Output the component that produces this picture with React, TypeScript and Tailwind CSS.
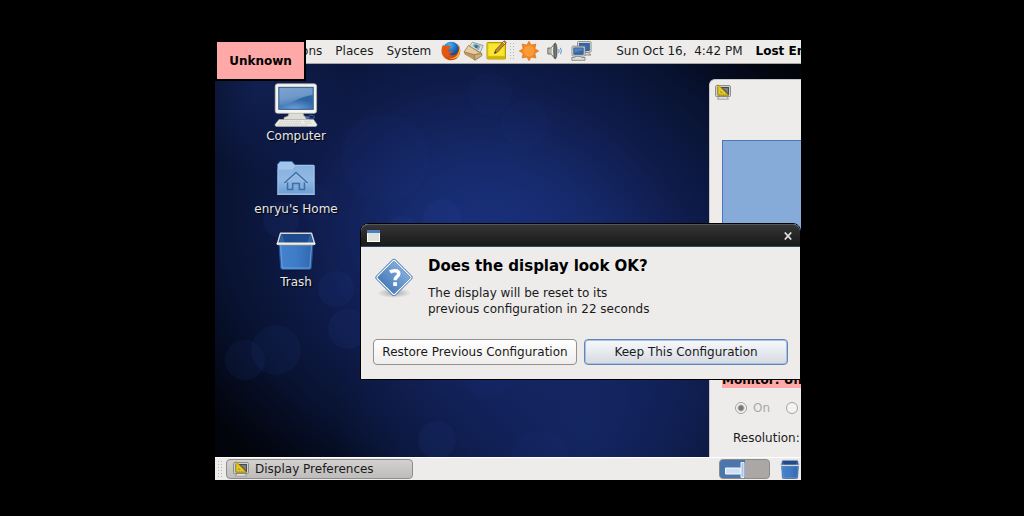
import type { ReactNode } from "react";

function DisplayIcon({ className }: { className: string }) {
  return (
    <svg viewBox="0 0 16 16" className={className} aria-hidden="true">
      <path d="M4 12.500h8l1.500 2.700H2.500z" fill="#e6e6e2" stroke="#8b8d88" strokeWidth=".8" />
      <rect x=".6" y="1.600" width="14.800" height="11" rx="1" fill="#d8d9d4" stroke="#85877f" />
      <rect x="3" y="3.400" width="10.400" height="7.600" fill="#55585a" stroke="#34383a" strokeWidth=".8" />
      <path d="M8 4l5 0 0 5z" fill="#7c8083" />
      <path d="M3 .6v10.600h10.400z" fill="#e9c820" stroke="#a58a00" strokeWidth=".7" />
      <path d="M5.400 6.800v2.200h2.400z" fill="#a8943c" />
      <path d="M4.600 10.800v-1M6.600 10.800v-1M8.600 10.800v-1M10.600 10.800v-1" stroke="#8e7600" strokeWidth=".5" />
    </svg>
  );
}

function FirefoxIcon() {
  return (
    <svg viewBox="0 0 20 20" className="size-5 shrink-0" aria-hidden="true">
      <defs>
        <radialGradient id="globe" cx=".4" cy=".2" r=".8">
          <stop offset="0" stopColor="#4fb4ec" />
          <stop offset=".6" stopColor="#1d5fb2" />
          <stop offset="1" stopColor="#132f72" />
        </radialGradient>
        <linearGradient id="fox" x1="0" y1="0" x2=".7" y2="1">
          <stop offset="0" stopColor="#e8590c" />
          <stop offset=".6" stopColor="#e4560f" />
          <stop offset="1" stopColor="#c23c0b" />
        </linearGradient>
      </defs>
      <circle cx="10.200" cy="9.200" r="8.400" fill="url(#globe)" />
      <path
        d="M2.100 3.600C.3 6.600.2 10.400.9 12.800 2.500 17 6 19.300 10 19.300c5.400 0 9.300-4.200 9.300-9.500 0-2.900-1-4.900-2.200-6.200.7 1.500.9 2.900.7 4.200C17.300 11.800 14.600 14.300 11.600 14.300c-1.700 0-3-.7-3.700-1.900 1.400.3 2.500-.5 3.600-1.200.5-.3.3-1-.5-1-1.300 0-1.600.6-2.900.3-1-.3-1.500-1-1.400-1.900.6-.4 1.300-.4 2.100-.1 0-1-.2-1.400-.3-1.700.3-.9 1.100-1.400 1.800-1.800C8.900 4.700 7.500 4.500 6.500 4.900 5.400 4.600 4.500 4.700 3.600 5.300 2.900 4.900 2.400 4.300 2.100 3.600z"
        fill="url(#fox)"
      />
      <path d="M17.400 4.200c1.400 3.700.9 7.600-1.600 10.300-2.200 2.300-5 3-7.800 2.300 3.600 2.100 8.200.7 10.100-2.900 1.500-3 1.200-7-.7-9.700z" fill="#fbc02a" />
    </svg>
  );
}

function MailIcon() {
  return (
    <svg viewBox="0 0 21 20" className="h-5 w-[21px] shrink-0" aria-hidden="true">
      <path d="M6 5.500L9.500 1.200l10.700 3.300-3.200 7.500z" fill="#dde5e0" stroke="#84908a" strokeWidth=".8" />
      <path d="M9.300 4.800l2-2.200 6.400 2.200-2.200 4.600z" fill="#86aec2" />
      <circle cx="13.300" cy="5.400" r="1.700" fill="#3d7187" />
      <path d="M1 11l4.500-6.500L18.800 12.500v2.300l-6.800 4.400z" fill="#d3b07a" stroke="#8d7044" strokeWidth=".8" />
      <path d="M5.500 5l9.500 6.200-4 2.300L1.500 11z" fill="#e3cda3" />
      <path d="M1 11l.6 2.500L12 19.200l-.5-5.500z" fill="#bf9860" />
      <path d="M1 11l10.500 2.700L18.800 12.500M11.500 13.700l.5 5.500" fill="none" stroke="#98784a" strokeWidth=".8" />
    </svg>
  );
}

function NoteIcon() {
  return (
    <svg viewBox="0 0 21 21" className="size-[21px] shrink-0" aria-hidden="true">
      <rect x="1" y="2.500" width="18.500" height="16.500" rx=".8" fill="#ecd412" stroke="#b99b00" />
      <rect x="2.700" y="4.200" width="15" height="11.500" fill="#f8e832" />
      <path d="M1.500 16.200h17.500v2.400H1.500z" fill="#d2b400" />
      <path d="M8.500 13.500l1-3.400L18.300.8l2 1.700-9 9.800z" fill="#c68b3a" stroke="#6d4a16" strokeWidth=".8" />
      <path d="M8.500 13.500l.6-2 1.300 1.100z" fill="#222" />
      <path d="M17 2.200l2 1.700" stroke="#efe6d2" strokeWidth=".9" />
    </svg>
  );
}

function SunIcon() {
  return (
    <svg viewBox="0 0 20 20" className="size-5 shrink-0" aria-hidden="true">
      <path
        d="M10 .2l2.100 3.900L16.900 3l-1 4.700L19.800 10l-3.900 2.200 1 4.800-4.800-1L10 19.800 7.900 16l-4.800 1 1-4.800L.2 10l3.900-2.300-1-4.700 4.800 1.100z"
        fill="#f5851f"
        stroke="#d96a0b"
        strokeWidth=".6"
      />
      <circle cx="10" cy="10" r="5.600" fill="#fb9a38" />
    </svg>
  );
}

function SpeakerIcon() {
  return (
    <svg viewBox="0 0 16 20" className="h-5 w-4 shrink-0" aria-hidden="true">
      <path d="M.8 7h3.200L8 2.200v15.600L4 13H.8z" fill="#b4b7b2" stroke="#5c5f5b" strokeWidth=".8" />
      <path d="M5.500 6v8" stroke="#e7e8e5" strokeWidth="1.300" />
      <ellipse cx="8.400" cy="10" rx="1.600" ry="7.800" fill="#747872" stroke="#3f423f" strokeWidth=".7" />
      <path d="M11.600 8.200q1.200 1.800 0 3.600M13.400 6.800q2 3.200 0 6.400" fill="none" stroke="#5c92cf" />
    </svg>
  );
}

function NetworkIcon() {
  return (
    <svg viewBox="0 0 21 20" className="h-5 w-[21px] shrink-0" aria-hidden="true">
      <g stroke="#747773" strokeWidth=".8">
        <path d="M12 11.500h5l3 2.500H10z" fill="#deded9" />
        <rect x="6.500" y=".6" width="13.500" height="10.600" rx=".8" fill="#e9e9e5" />
        <rect x="8.300" y="2.300" width="10" height="7.200" fill="#3568ac" stroke="#264d84" />
        <path d="M5 15h4l1.500 1.500h3.500v2.800H.8v-2.800h3z" fill="#deded9" />
        <rect x="1" y="5.200" width="13" height="9.800" rx=".8" fill="#e9e9e5" />
        <rect x="2.800" y="6.900" width="9.400" height="6.400" fill="#3568ac" stroke="#264d84" />
      </g>
      <path d="M3.200 11.500c4-.4 6-2 8.600-2.200V7.300H3.200z" fill="#6d9bd2" opacity=".5" />
    </svg>
  );
}

function ComputerIcon() {
  return (
    <svg viewBox="0 0 44 44" className="size-11" aria-hidden="true">
      <defs>
        <linearGradient id="screen" x1="0" y1="0" x2=".3" y2="1">
          <stop offset="0" stopColor="#7ea3cb" />
          <stop offset=".5" stopColor="#6f99c9" />
          <stop offset="1" stopColor="#3a70b0" />
        </linearGradient>
        <radialGradient id="reflection" cx=".45" cy="1" r=".7">
          <stop offset="0" stopColor="#6da0dc" />
          <stop offset="1" stopColor="#2f66a5" />
        </radialGradient>
      </defs>
      <path d="M15 30h14l1 3 5 1.500v2H10v-2l4-1.500z" fill="#dcddd6" stroke="#a2a49c" strokeWidth=".5" />
      <path d="M31 34c3 .6 4-2 7-1.600 3 .4 3 2.600 1 2.800-4 .2-6-.6-7 1" fill="none" stroke="#2f588f" strokeWidth="1.200" />
      <rect x="1.200" y=".8" width="41.400" height="29.500" rx="2.500" fill="#f4f4f0" stroke="#b9bab3" strokeWidth=".7" />
      <rect x="4.800" y="4.300" width="34.400" height="22" fill="url(#screen)" stroke="#2c5489" />
      <path d="M5.300 23c10 0 18-9 33.400-11v13.800H5.300z" fill="url(#reflection)" />
      <path d="M5 36.500h34.500L43 41.500q0 2-1.500 2h-39q-1.500 0-1.500-2z" fill="#ecece7" stroke="#b3b4ab" strokeWidth=".6" />
      <path d="M6 38.300h21M5 40.300h22M4 42.100h30M30 38.300h7M31 40.300h7" stroke="#c6c7bf" strokeWidth=".9" strokeDasharray="1.600 .7" />
    </svg>
  );
}

function HomeIcon() {
  return (
    <svg viewBox="0 0 40 36" className="h-9 w-10" aria-hidden="true">
      <defs>
        <linearGradient id="folder" x1="0" y1="0" x2="0" y2="1">
          <stop offset="0" stopColor="#86b0de" />
          <stop offset=".5" stopColor="#93b9e3" />
          <stop offset="1" stopColor="#6e9ed3" />
        </linearGradient>
      </defs>
      <path d="M1.500 9V4.500L4 1.500h12l3 3.500H37q1.500 0 1.500 1.500v27H1.500z" fill="#a3c4ea" stroke="#4a7ab4" />
      <path d="M2 9h14L19.500 5.500H38V34H2z" fill="url(#folder)" stroke="#a9c9ec" strokeWidth=".8" />
      <path d="M1 34.500h38" stroke="#b3cfee" strokeWidth=".8" />
      <path d="M8.500 23L20 12.500 31.500 23M11.500 22v7.500h5.200v-6h6.600v6h5.200V22" fill="none" stroke="#3f6fa9" strokeWidth="1.500" />
      <path d="M9 24.300L20 14.200 31 24.300" fill="none" stroke="#b4d0ef" strokeWidth=".6" />
    </svg>
  );
}

function TrashIcon({ className }: { className: string }) {
  return (
    <svg viewBox="0 0 40 40" className={className} aria-hidden="true">
      <defs>
        <linearGradient id="bin" x1="0" y1="0" x2="1" y2="0">
          <stop offset="0" stopColor="#4483cf" />
          <stop offset=".5" stopColor="#3f7cc6" />
          <stop offset="1" stopColor="#3067ae" />
        </linearGradient>
      </defs>
      <ellipse cx="20" cy="38.500" rx="16" ry="1.300" fill="#000" opacity=".35" />
      <path d="M3 12l1.600 24.500q.2 2 2 2h26.800q1.800 0 2-2L37 12z" fill="url(#bin)" stroke="#24518f" />
      <path d="M4.500 14l1.700 23h27.600l1.700-23z" fill="none" stroke="#74a5df" strokeWidth=".8" />
      <path d="M4.500 2.500h31L38.500 12H1.500z" fill="#1f4a8b" />
      <path d="M5.500 3.500L3 12h6L6 3z" fill="#2d61a8" />
      <path d="M34.500 3.500L37 12h-6l3-9z" fill="#2d61a8" />
      <path d="M4.500 2.200h31L38.700 13H1.300z" fill="none" stroke="#d9d8d2" strokeWidth="1.400" strokeLinejoin="round" />
      <path d="M1.700 12.600h36.600" stroke="#f1f0ec" strokeWidth="2.200" strokeLinecap="round" />
      <path d="M2.500 14.300h35" stroke="#88827a" strokeWidth=".7" />
    </svg>
  );
}

function QuestionIcon() {
  return (
    <svg viewBox="0 0 42 42" className="size-[42px] shrink-0" aria-hidden="true">
      <defs>
        <linearGradient id="sign" x1="0" y1="0" x2="0" y2="1">
          <stop offset="0" stopColor="#7ea9dc" />
          <stop offset="1" stopColor="#4c7fbc" />
        </linearGradient>
        <radialGradient id="shade">
          <stop offset="0" stopColor="#000" stopOpacity=".3" />
          <stop offset="1" stopColor="#000" stopOpacity="0" />
        </radialGradient>
      </defs>
      <ellipse cx="21" cy="36" rx="17" ry="5" fill="url(#shade)" />
      <rect x="7.500" y="7" width="27" height="27" rx="2.500" transform="rotate(45 21 20.500)" fill="#fff" stroke="#5b88bf" />
      <rect x="9.300" y="8.800" width="23.400" height="23.400" rx="1" transform="rotate(45 21 20.500)" fill="url(#sign)" stroke="#47749f" strokeWidth=".6" />
      <path d="M17 15q2-1.300 4.800-1.300 4 0 4 3.100 0 1.700-2.100 3.200-1.600 1.100-1.600 3.300" fill="none" stroke="#fff" strokeWidth="3.500" />
      <rect x="20.200" y="25.200" width="3.800" height="3.800" fill="#fff" />
    </svg>
  );
}

function Wallpaper() {
  const bubbles = [
    [227, 178, 19], [222, 400, 19], [61, 310, 25], [30, 320, 20], [101, 162, 18], [121, 249, 18], [133, 289, 20],
    [273, 330, 27], [187, 194, 18], [170, 118, 44], [275, 54, 22], [310, 84, 24], [66, 180, 18], [325, 420, 30],
  ];
  return (
    <svg className="absolute inset-0 h-full w-full" viewBox="0 0 586 440" preserveAspectRatio="none" aria-hidden="true">
      <defs>
        <radialGradient id="glow" gradientUnits="userSpaceOnUse" cx="0" cy="0" r="1" gradientTransform="translate(285 205) rotate(20) scale(390 310)">
          <stop offset="0" stopColor="#1a3180" />
          <stop offset=".25" stopColor="#162a6c" />
          <stop offset=".5" stopColor="#0f1c4c" />
          <stop offset=".75" stopColor="#081230" />
          <stop offset="1" stopColor="#02040b" />
        </radialGradient>
        <radialGradient id="corner" gradientUnits="userSpaceOnUse" cx="45" cy="45" r="90">
          <stop offset="0" stopColor="#15265f" stopOpacity=".7" />
          <stop offset="1" stopColor="#15265f" stopOpacity="0" />
        </radialGradient>
        <radialGradient id="lower" gradientUnits="userSpaceOnUse" cx="370" cy="390" r="250">
          <stop offset="0" stopColor="#152868" stopOpacity=".85" />
          <stop offset="1" stopColor="#152868" stopOpacity="0" />
        </radialGradient>
      </defs>
      <rect width="586" height="440" fill="url(#glow)" />
      <rect width="586" height="440" fill="url(#corner)" />
      <rect width="586" height="440" fill="url(#lower)" />
      {bubbles.map(([x, y, r]) => (
        <circle key={`${x}-${y}`} cx={x} cy={y} r={r} fill="#3c62d8" opacity={x < 230 && y > 170 ? 0.07 : 0.03} />
      ))}
    </svg>
  );
}

function Grip() {
  return (
    <svg viewBox="0 0 6 18" className="h-[18px] w-1.5 shrink-0" aria-hidden="true">
      <path d="M1.500 1v17M4.500 1v17" stroke="#b5b3b0" strokeWidth="1" strokeDasharray="1 2" />
    </svg>
  );
}

function DesktopItem({ icon, label }: { icon: ReactNode; label: string }) {
  return (
    <a href="#" className="flex h-[73px] flex-col items-center">
      <span className="flex h-11 items-center">{icon}</span>
      <span className="mt-px leading-4 text-[#e8e8e8] [text-shadow:1px_1px_1px_#000]">{label}</span>
    </a>
  );
}

function PreferencesWindow() {
  return (
    <section aria-label="Display Preferences" className="absolute top-[39px] bottom-0 left-[494px] w-[420px] rounded-t-md border border-b-0 border-[#c9c7c5] bg-[#edeceb]">
      <div className="flex h-6 items-center px-[5px]">
        <DisplayIcon className="size-4" />
      </div>
      <div className="mx-3 mt-9 h-[220px] border border-[#4a78b4] bg-[#86abd9]" />
      <h2 className="mx-3 mt-3 h-4 bg-[#ffa8a8] leading-4 font-bold whitespace-nowrap text-black">Monitor: Unknown</h2>
      <fieldset disabled className="mt-3 ml-[25px] flex h-4 items-center text-[#aaa8a6]">
        <label className="flex items-center gap-1.5">
          <input type="radio" name="power" defaultChecked className="size-3 appearance-none rounded-full border border-[#a5a3a1] bg-[radial-gradient(circle,#777_0_2px,#f4f4f3_4px)]" />
          On
        </label>
        <label className="ml-4 flex items-center gap-1.5">
          <input type="radio" name="power" className="size-3 appearance-none rounded-full border border-[#a5a3a1] bg-[#f4f4f3]" />
          Off
        </label>
      </fieldset>
      <p className="mt-3.5 ml-[23px] leading-4">Resolution:</p>
    </section>
  );
}

function ConfirmDialog() {
  return (
    <section role="dialog" aria-labelledby="confirm-title" className="absolute top-[183px] left-[145px] w-[441px] rounded-t-lg border border-black bg-[#edeceb]">
      <div className="flex h-[23px] items-center justify-between rounded-t-[7px] border-t border-b border-t-[#555] border-b-[#2f4c70] bg-linear-to-b from-[#353535] to-[#191919] px-1.5">
        <svg viewBox="0 0 13 12" className="h-3 w-[13px]" aria-hidden="true">
          <rect x=".5" y=".5" width="12" height="11" fill="#e0e0da" stroke="#fff" />
          <path d="M0 0h13v3H0z" fill="#4d7fc0" />
        </svg>
        <button type="button" aria-label="Close" className="flex size-3 items-center justify-center">
          <svg viewBox="0 0 8 8" className="size-2" aria-hidden="true">
            <path d="M.8.5l6.400 7M7.200.5L.8 7.500" stroke="#dcdcdc" strokeWidth="1.800" />
          </svg>
        </button>
      </div>
      <div className="flex gap-[13px] px-3 pt-2.5">
        <QuestionIcon />
        <div>
          <h1 id="confirm-title" className="text-[15px] leading-[18px] font-bold text-black">Does the display look OK?</h1>
          <p className="mt-2.5 leading-4">
            The display will be reset to its
            <br />
            previous configuration in 22 seconds
          </p>
        </div>
      </div>
      <div className="grid grid-cols-2 gap-[7px] px-3 pt-[22px] pb-3.5">
        <button type="button" className="h-[26px] rounded border border-[#93918f] bg-linear-to-b from-white to-[#efeeed] whitespace-nowrap">
          Restore Previous Configuration
        </button>
        <button type="button" className="h-[26px] rounded border border-[#6187b8] bg-linear-to-b from-[#f7f9fc] to-[#d6dae1] whitespace-nowrap inset-ring inset-ring-[#a9c0de]">
          Keep This Configuration
        </button>
      </div>
    </section>
  );
}

export default function App() {
  return (
    <div className="flex min-h-screen flex-col bg-black pt-10 pr-[223px] pb-9 pl-[215px] font-['DejaVu_Sans',sans-serif] text-xs text-[#1a1a1a]">
      <main className="relative flex flex-1 flex-col overflow-hidden">
        <Wallpaper />
        <header className="relative flex h-6 items-center border-b border-[#a9a7a5] bg-[#edeceb] pb-0.5 whitespace-nowrap">
          <nav className="flex shrink-0 gap-[13px] pl-[34px]">
            <a href="#">Applications</a>
            <a href="#">Places</a>
            <a href="#">System</a>
          </nav>
          <div className="ml-2.5 flex shrink-0 items-center gap-0.5">
            <FirefoxIcon />
            <MailIcon />
            <NoteIcon />
            <Grip />
          </div>
          <div className="ml-1 flex shrink-0 items-center gap-2">
            <SunIcon />
            <SpeakerIcon />
            <NetworkIcon />
          </div>
          <time className="ml-6 shrink-0 whitespace-pre">Sun Oct 16,  4:42 PM</time>
          <span className="ml-[13px] shrink-0 font-bold text-black">Lost Entry</span>
        </header>

        <div className="relative flex-1">
          <div className="flex w-[162px] flex-col pt-[19px]">
            <DesktopItem icon={<ComputerIcon />} label="Computer" />
            <DesktopItem icon={<HomeIcon />} label="enryu's Home" />
            <DesktopItem icon={<TrashIcon className="size-10" />} label="Trash" />
          </div>
        </div>

        <div className="absolute inset-x-0 top-0 bottom-[23px] overflow-hidden">
          <PreferencesWindow />
          <ConfirmDialog />
        </div>

        <footer className="relative flex h-[23px] items-center justify-between border-t border-white bg-[#edeceb]">
          <div className="flex items-center gap-[3px] pl-0.5">
            <Grip />
            <button type="button" className="flex h-5 w-[187px] items-center gap-1.5 rounded-sm border border-[#8f8d8b] bg-linear-to-b from-[#d3d1cf] to-[#bfbdbb] px-1.5">
              <DisplayIcon className="size-4" />
              Display Preferences
            </button>
          </div>
          <div className="flex items-center gap-2.5 pr-px">
            <div className="flex h-5 w-[51px] overflow-hidden rounded-sm border border-[#8d8b89] bg-[#aaa7a4]">
              <svg viewBox="0 0 25 18" className="h-full w-[25px] bg-[#4b76ab]" aria-hidden="true">
                <path d="M5.500 8h15v6h-15z" fill="#cfe0f5" stroke="#f4f8fd" />
                <path d="M21 2.500h3v15h-3z" fill="#a9c6ea" stroke="#eaf2fb" />
              </svg>
            </div>
            <TrashIcon className="size-5" />
          </div>
        </footer>

        <div className="absolute top-0 left-0 flex h-[41px] w-[91px] items-center justify-center border-2 border-black bg-[#ffa8a8] font-bold text-black">
          Unknown
        </div>
      </main>
    </div>
  );
}
